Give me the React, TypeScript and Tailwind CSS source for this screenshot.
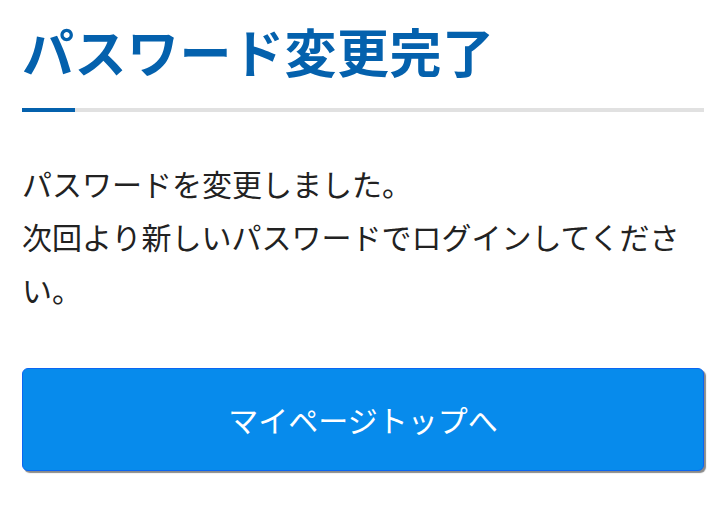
export default function App() {
  return (
    <main
      className="min-h-screen bg-white px-[22px] pt-[18px]"
      style={{ fontFamily: '"Noto Sans CJK JP", "Noto Sans", sans-serif' }}
    >
      {/* 見出し */}
      <h1 className="text-[52px] font-bold leading-[66px] tracking-[0.5px] text-[#0461ad]">
        パスワード変更完了
      </h1>
      <div className="mt-[24px] flex h-[4px] bg-[#e1e1e1]">
        <div className="w-[53px] bg-[#0461ad]" />
      </div>

      {/* メッセージ */}
      <p className="mt-[45px] text-[30px] leading-[53px] text-[#222]">
        パスワードを変更しました。
        <br />
        次回より新しいパスワードでログインしてください。
      </p>

      {/* ボタン */}
      <button className="mt-[52px] flex h-[103px] w-full items-center justify-center rounded-[6px] border border-[#0a66f2] bg-[#078bec] text-[30px] text-white shadow-[2px_2px_1px_#8a8a8a]">
        マイページトップへ
      </button>
    </main>
  )
}
